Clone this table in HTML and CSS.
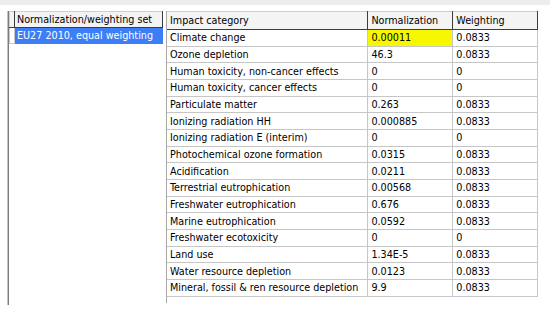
FILE: index.html
```html
<!DOCTYPE html>
<html>
<head>
    <title>Normalization / weighting</title>
    <link rel="stylesheet" href="styles.css">
</head>
<body>
    <div class="topbar"></div>
    <div class="main">
        <div class="sets">
            <table class="set-table">
                <tr>
                    <th class="sel"></th>
                    <th>Normalization/weighting set</th>
                </tr>
                <tr class="picked">
                    <td class="sel"></td>
                    <td class="name">EU27 2010, equal weighting</td>
                </tr>
            </table>
        </div>
        <div class="factors">
            <table class="factor-table">
                <tr>
                    <th class="col-cat">Impact category</th>
                    <th class="col-norm">Normalization</th>
                    <th class="col-weight">Weighting</th>
                </tr>
                <tr><td>Climate change</td><td class="hilite">0.00011</td><td>0.0833</td></tr>
                <tr><td>Ozone depletion</td><td>46.3</td><td>0.0833</td></tr>
                <tr><td>Human toxicity, non-cancer effects</td><td>0</td><td>0</td></tr>
                <tr><td>Human toxicity, cancer effects</td><td>0</td><td>0</td></tr>
                <tr><td>Particulate matter</td><td>0.263</td><td>0.0833</td></tr>
                <tr><td>Ionizing radiation HH</td><td>0.000885</td><td>0.0833</td></tr>
                <tr><td>Ionizing radiation E (interim)</td><td>0</td><td>0</td></tr>
                <tr><td>Photochemical ozone formation</td><td>0.0315</td><td>0.0833</td></tr>
                <tr><td>Acidification</td><td>0.0211</td><td>0.0833</td></tr>
                <tr><td>Terrestrial eutrophication</td><td>0.00568</td><td>0.0833</td></tr>
                <tr><td>Freshwater eutrophication</td><td>0.676</td><td>0.0833</td></tr>
                <tr><td>Marine eutrophication</td><td>0.0592</td><td>0.0833</td></tr>
                <tr><td>Freshwater ecotoxicity</td><td>0</td><td>0</td></tr>
                <tr><td>Land use</td><td>1.34E-5</td><td>0.0833</td></tr>
                <tr><td>Water resource depletion</td><td>0.0123</td><td>0.0833</td></tr>
                <tr><td>Mineral, fossil &amp; ren resource depletion</td><td>9.9</td><td>0.0833</td></tr>
            </table>
        </div>
    </div>
</body>
</html>
```

FILE: styles.css
```css
* {
    box-sizing: border-box;
}

body {
    margin: 0;
    background-color: #fff;
    color: #000;
    font-family: "DejaVu Sans Condensed", "DejaVu Sans", sans-serif;
    font-size: 10.7px;
}

.topbar {
    height: 5px;
    background-color: #ededed;
}

.main {
    display: flex;
    padding: 6px 0 0 7px;
}

.sets {
    flex: none;
    width: 156px;
    height: 294px;
    border-left: 1px solid #c4c4c4;
    box-shadow: inset 1px 0 0 #7c7c7c;
    padding-left: 1px;
}

.set-table {
    border-collapse: collapse;
    width: 154px;
}

.set-table th {
    height: 16px;
    padding: 0 2px;
    background-color: #f3f3f3;
    border-top: 1px solid #cfcfcf;
    border-left: 1px solid #cfcfcf;
    border-right: 1px solid #3c3c3c;
    border-bottom: 1px solid #3c3c3c;
    font-weight: normal;
    text-align: left;
    white-space: nowrap;
}

.set-table .sel {
    width: 5px;
    padding: 0;
}

.set-table td {
    height: 16px;
    padding: 0 2px;
    white-space: nowrap;
}

.set-table td.sel {
    border: 1px solid #c8c8c8;
    border-top: none;
    background-color: #fff;
}

.picked .name {
    background-color: #3d7ef7;
    color: #fff;
    border-top: 1px solid #fff;
}

.factors {
    flex: none;
    width: 372px;
    margin-left: 3px;
    height: 292px;
    border-left: 1px solid #a8a8a8;
}

.factor-table {
    border-collapse: collapse;
    width: 371px;
}

.col-cat {
    width: 201px;
}

.col-norm {
    width: 85px;
}

.col-weight {
    width: 85px;
}

.factor-table th {
    height: 18px;
    padding: 0 3px;
    background-color: #f4f4f4;
    border-top: 1px solid #cfcfcf;
    border-right: 1px solid #3c3c3c;
    border-bottom: 1px solid #3c3c3c;
    font-weight: normal;
    text-align: left;
    white-space: nowrap;
}

.factor-table td {
    height: 16.67px;
    padding: 0 3px;
    border-right: 1px solid #c6c6c6;
    border-bottom: 1px solid #c6c6c6;
    white-space: nowrap;
}

.factor-table td.hilite {
    background-color: #f7f700;
}
```
